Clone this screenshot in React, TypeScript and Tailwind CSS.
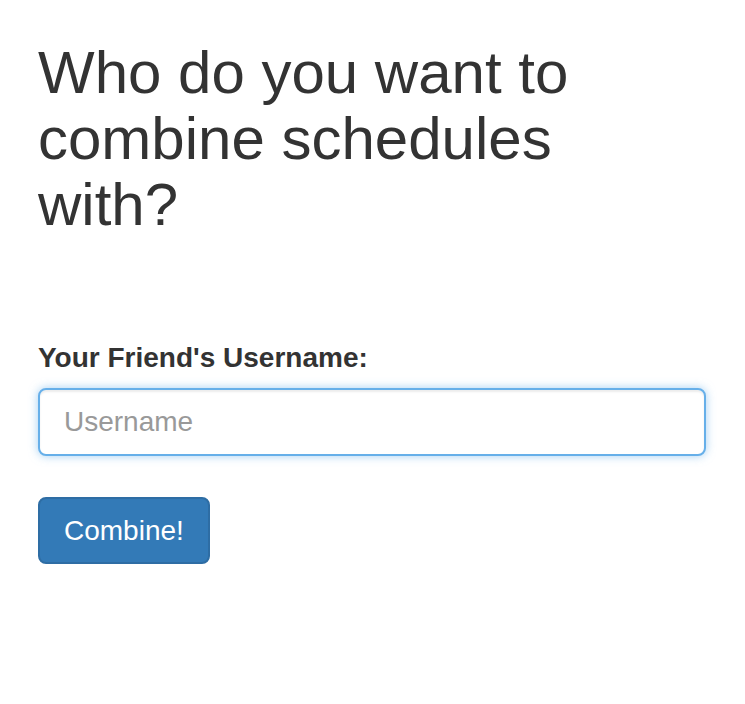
import React, { useState } from 'react';

export default function App() {
  const [username, setUsername] = useState('');

  return (
    <div className="min-h-screen bg-white pl-[38px] pr-[39px] text-[#333] font-['Liberation_Sans',Arial,sans-serif]">
      {/* Heading */}
      <h2 className="max-w-[600px] pt-[40px] text-[60px] leading-[66px] font-normal">
        Who do you want to combine schedules with?
      </h2>

      <form
        className="mt-[100px]"
        onSubmit={(e) => e.preventDefault()}
      >
        <div className="mb-[41px]">
          <label htmlFor="username" className="block mb-[10px] text-[28px] leading-[40px] font-bold">
            Your Friend's Username:
          </label>
          <input
            id="username"
            type="text"
            autoFocus
            placeholder="Username"
            value={username}
            onChange={(e) => setUsername(e.target.value)}
            className="block w-full h-[68px] px-[24px] py-[12px] text-[28px] leading-[40px] text-[#555] bg-white border-2 border-[#66afe9] rounded-[8px] outline-none placeholder:text-[#999] shadow-[inset_0_2px_2px_rgba(0,0,0,0.075),0_0_10px_rgba(102,175,233,0.6)]"
          />
        </div>
        <button
          type="submit"
          className="h-[67px] px-[24px] text-[28px] leading-[40px] text-white bg-[#337ab7] border-2 border-[#2e6da4] rounded-[8px]"
        >
          Combine!
        </button>
      </form>
    </div>
  );
}
